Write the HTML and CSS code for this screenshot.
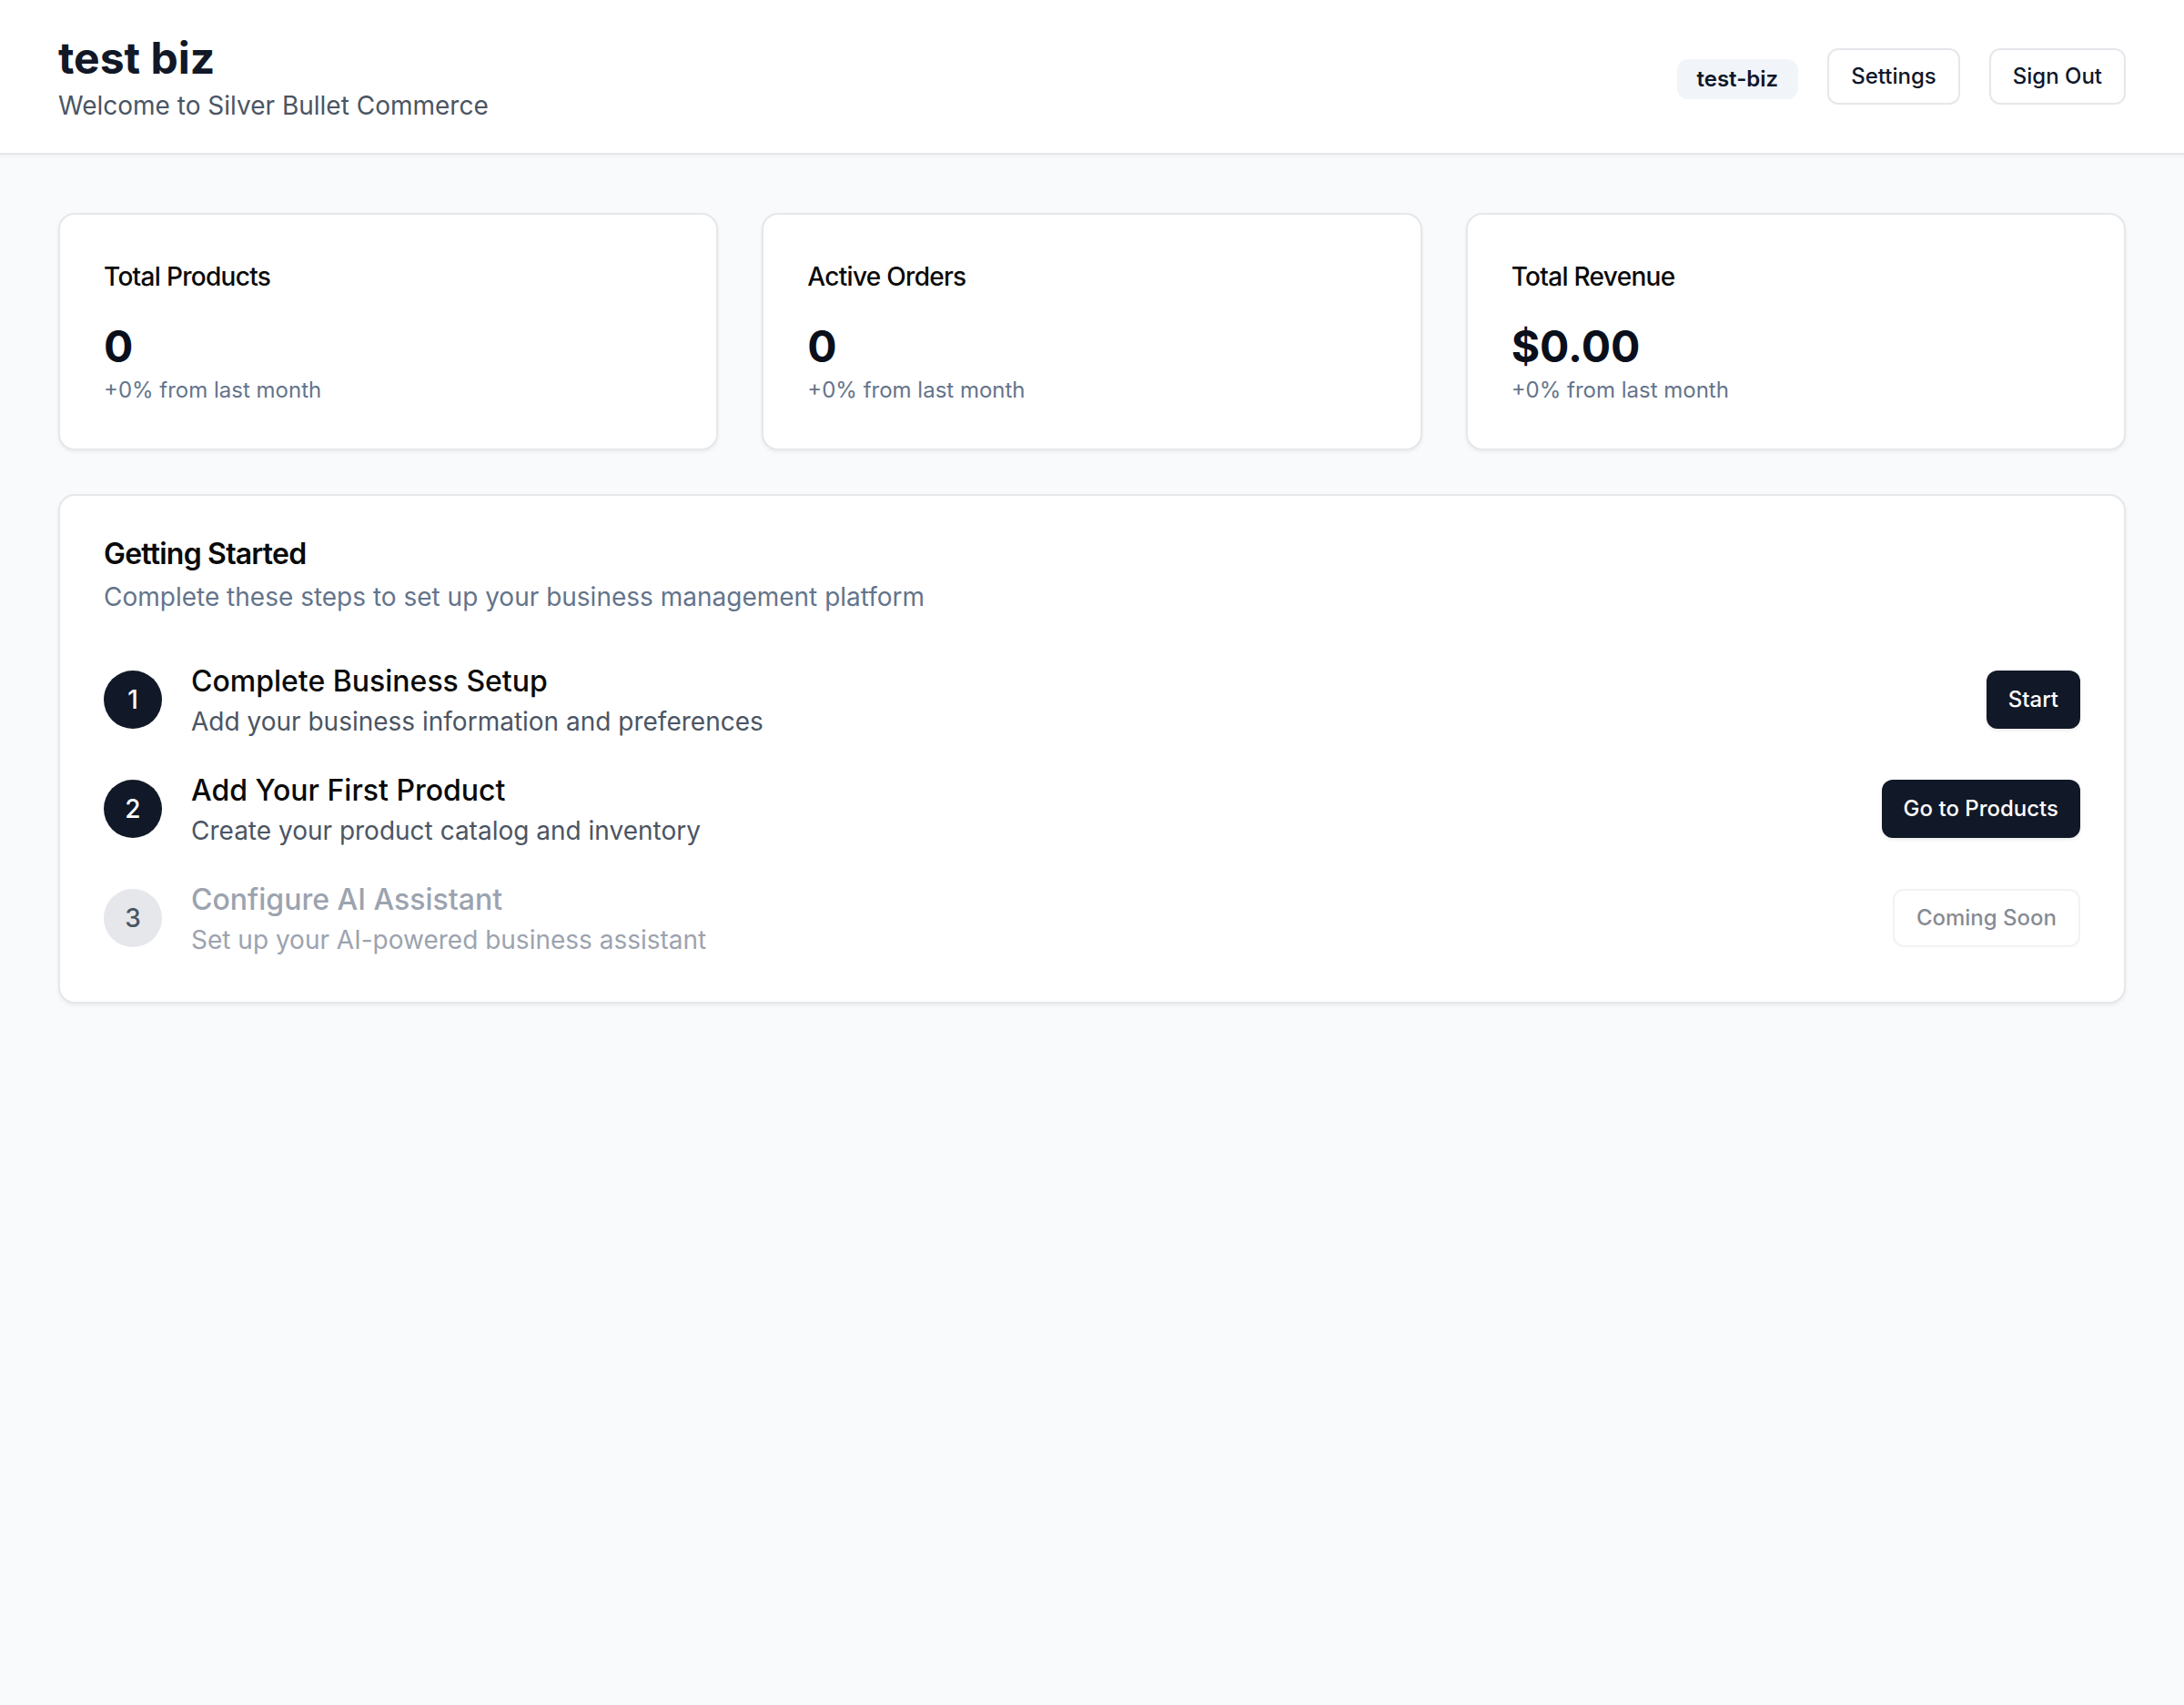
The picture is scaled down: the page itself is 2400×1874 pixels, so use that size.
FILE: index.html
```html
<!DOCTYPE html>
<html lang="en">
<head>
<meta charset="utf-8">
<title>test biz</title>
<link rel="stylesheet" href="styles.css">
</head>
<body>
<header class="topbar">
  <div class="topbar-inner">
    <div class="brand">
      <h1 class="brand-title">test biz</h1>
      <p class="brand-sub">Welcome to Silver Bullet Commerce</p>
    </div>
    <div class="actions">
      <span class="badge">test-biz</span>
      <button class="btn btn-outline">Settings</button>
      <button class="btn btn-outline">Sign Out</button>
    </div>
  </div>
</header>
<main class="main">
  <section class="stats">
    <div class="card stat">
      <div class="stat-title">Total Products</div>
      <div class="stat-value">0</div>
      <div class="stat-sub">+0% from last month</div>
    </div>
    <div class="card stat">
      <div class="stat-title">Active Orders</div>
      <div class="stat-value">0</div>
      <div class="stat-sub">+0% from last month</div>
    </div>
    <div class="card stat">
      <div class="stat-title">Total Revenue</div>
      <div class="stat-value">$0.00</div>
      <div class="stat-sub">+0% from last month</div>
    </div>
  </section>
  <section class="card guide">
    <div class="guide-head">
      <h2 class="guide-title">Getting Started</h2>
      <p class="guide-desc">Complete these steps to set up your business management platform</p>
    </div>
    <div class="steps">
      <div class="step">
        <div class="step-num">1</div>
        <div class="step-text">
          <div class="step-title">Complete Business Setup</div>
          <div class="step-desc">Add your business information and preferences</div>
        </div>
        <button class="btn btn-dark">Start</button>
      </div>
      <div class="step">
        <div class="step-num">2</div>
        <div class="step-text">
          <div class="step-title">Add Your First Product</div>
          <div class="step-desc">Create your product catalog and inventory</div>
        </div>
        <button class="btn btn-dark">Go to Products</button>
      </div>
      <div class="step step-muted">
        <div class="step-num">3</div>
        <div class="step-text">
          <div class="step-title">Configure AI Assistant</div>
          <div class="step-desc">Set up your AI-powered business assistant</div>
        </div>
        <button class="btn btn-outline btn-disabled" disabled>Coming Soon</button>
      </div>
    </div>
  </section>
</main>
</body>
</html>
```

FILE: styles.css
```css
* { box-sizing: border-box; }
html, body { margin: 0; padding: 0; }
body {
  font-family: Inter, "Noto Sans", "Liberation Sans", sans-serif;
  background: #f9fafb;
  color: #0f172a;
  min-height: 1874px;
}
h1, h2, p { margin: 0; }

.topbar {
  background: #ffffff;
  border-bottom: 2px solid #e5e7eb;
  box-shadow: 0 2px 4px rgba(0,0,0,0.04);
}
.topbar-inner {
  display: flex;
  align-items: center;
  justify-content: space-between;
  padding: 32px 64px;
}
.brand-title {
  font-size: 48px;
  line-height: 64px;
  font-weight: 700;
  color: #111827;
}
.brand-sub {
  font-size: 28px;
  line-height: 40px;
  color: #4b5563;
}
.actions {
  display: flex;
  align-items: center;
  gap: 32px;
}
.badge {
  display: inline-block;
  margin-top: 6px;
  padding: 4px 20px;
  border: 2px solid transparent;
  border-radius: 12px;
  background: #f1f5f9;
  color: #0f172a;
  font-size: 24px;
  line-height: 32px;
  font-weight: 600;
}
.btn {
  font-family: inherit;
  display: inline-flex;
  align-items: center;
  justify-content: center;
  height: 62px;
  padding: 0 24px;
  border-radius: 12px;
  font-size: 24px;
  line-height: 32px;
  font-weight: 500;
  cursor: pointer;
}
.btn-outline {
  background: #ffffff;
  color: #0f172a;
  border: 2px solid #e5e7eb;
}
.btn-dark {
  height: 64px;
  background: #111827;
  color: #ffffff;
  border: none;
  box-shadow: 0 2px 4px rgba(0,0,0,0.08);
}
.btn-disabled {
  height: 64px;
  opacity: 0.5;
  cursor: default;
}

.main {
  padding: 64px 64px 64px;
}
.card {
  background: #ffffff;
  border: 2px solid #e5e7eb;
  border-radius: 18px;
  box-shadow: 0 2px 4px rgba(0,0,0,0.06);
}
.stats {
  display: grid;
  grid-template-columns: repeat(3, 1fr);
  gap: 48px;
}
.stat {
  padding: 48px;
}
.stat-title {
  font-size: 28px;
  line-height: 40px;
  font-weight: 500;
  letter-spacing: -0.7px;
  color: #0a0a0a;
  margin-bottom: 25px;
}
.stat-value {
  font-size: 48px;
  line-height: 64px;
  font-weight: 700;
  color: #0a0f1c;
}
.stat-sub {
  font-size: 24px;
  line-height: 32px;
  color: #64748b;
}

.guide {
  margin-top: 48px;
  padding: 48px;
}
.guide-title {
  font-size: 32px;
  line-height: 32px;
  font-weight: 600;
  letter-spacing: -0.8px;
  color: #0a0a0a;
}
.guide-desc {
  margin-top: 11px;
  font-size: 28px;
  line-height: 40px;
  color: #64748b;
}
.steps {
  margin-top: 49px;
  display: flex;
  flex-direction: column;
  gap: 32px;
}
.step {
  display: flex;
  align-items: center;
  gap: 32px;
}
.step-num {
  flex: none;
  width: 64px;
  height: 64px;
  border-radius: 50%;
  background: #111827;
  color: #ffffff;
  display: flex;
  align-items: center;
  justify-content: center;
  font-size: 28px;
  font-weight: 500;
}
.step-text {
  flex: 1;
}
.step-title {
  font-size: 32px;
  line-height: 48px;
  font-weight: 500;
  color: #0a0a0a;
}
.step-desc {
  font-size: 28px;
  line-height: 40px;
  color: #4b5563;
}
.step-muted .step-num {
  background: #e5e7eb;
  color: #4b5563;
}
.step-muted .step-title,
.step-muted .step-desc {
  color: #9ca3af;
}
```
